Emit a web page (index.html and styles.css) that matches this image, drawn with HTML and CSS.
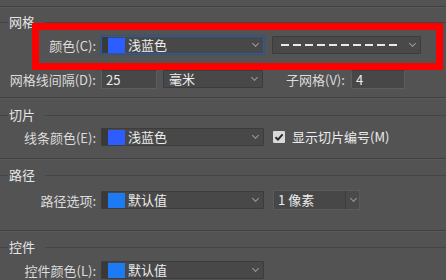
FILE: index.html
```html
<!DOCTYPE html>
<html lang="zh">
<head>
<meta charset="utf-8">
<link rel="stylesheet" href="styles.css">
</head>
<body>
<div class="panel">
  <section class="group g1">
    <div class="legend"><span class="lead"></span><span class="title">网格</span><span class="rule"></span></div>
    <div class="row r1">
      <label class="lbl">颜色(C):</label>
      <div class="combo focus w163"><span class="sw-pad"></span><span class="swatch lightblue"></span><span class="ctext">浅蓝色</span><span class="chev"></span></div>
      <div class="combo dashcombo"><span class="dashes"></span><span class="chev"></span></div>
    </div>
    <div class="row r2">
      <label class="lbl">网格线间隔(D):</label>
      <div class="input w55">25</div>
      <div class="combo w100"><span class="ctext pl">毫米</span><span class="chev"></span></div>
      <label class="lbl2">子网格(V):</label>
      <div class="input w54">4</div>
    </div>
    <div class="highlight"></div>
  </section>
  <section class="group g2">
    <div class="legend"><span class="lead"></span><span class="title">切片</span><span class="rule"></span></div>
    <div class="row">
      <label class="lbl">线条颜色(E):</label>
      <div class="combo w163"><span class="sw-pad"></span><span class="swatch lightblue"></span><span class="ctext">浅蓝色</span><span class="chev"></span></div>
      <div class="check"><span class="box"><svg width="12" height="12" viewBox="0 0 12 12"><path d="M2.5 6.2 L5 8.6 L9.6 3.4" fill="none" stroke="#2a2a2a" stroke-width="2"/></svg></span><span class="ctext">显示切片编号(M)</span></div>
    </div>
  </section>
  <section class="group g3">
    <div class="legend"><span class="lead"></span><span class="title">路径</span><span class="rule"></span></div>
    <div class="row">
      <label class="lbl">路径选项:</label>
      <div class="combo w163"><span class="sw-pad"></span><span class="swatch defblue"></span><span class="ctext">默认值</span><span class="chev"></span></div>
      <div class="editcombo"><span class="etext">1 像素</span><span class="ebtn"><span class="chev"></span></span></div>
    </div>
  </section>
  <section class="group g4">
    <div class="legend"><span class="lead"></span><span class="title">控件</span><span class="rule"></span></div>
    <div class="row">
      <label class="lbl">控件颜色(L):</label>
      <div class="combo w163"><span class="sw-pad"></span><span class="swatch defblue"></span><span class="ctext">默认值</span><span class="chev"></span></div>
    </div>
  </section>
</div>
</body>
</html>
```

FILE: styles.css
```css
* { box-sizing: border-box; }
html, body { margin: 0; padding: 0; }
body {
  width: 446px;
  height: 280px;
  overflow: hidden;
  background: #535353;
  color: #e2e2e2;
  font-family: "Noto Sans CJK SC", "Noto Sans", sans-serif;
  font-size: 13px;
}
.panel { padding-top: 6px; }
.group {
  position: relative;
  border-top: 1px solid #404040;
  box-shadow: inset 0 1px 0 #5a5a5a;
}
.g1 { padding-top: 7px; height: 91px; }
.g2 { padding-top: 9px; height: 61px; }
.g3 { padding-top: 8px; height: 72px; }
.g4 { padding-top: 8px; }

.legend {
  display: flex;
  align-items: center;
  height: 16px;
  line-height: 16px;
}
.legend .lead { width: 8px; height: 1px; background: #444; }
.legend .title { padding: 0 10px 0 1px; color: #e6e6e6; }
.legend .rule { flex: 1; height: 1px; background: #444; }

.row {
  display: flex;
  align-items: center;
  height: 20px;
}
.g1 .r1 { margin-top: 5px; }
.g1 .r2 { margin-top: 14px; }
.g2 .row { margin-top: 4px; }
.g3 .row { margin-top: 7px; }
.g4 .row { margin-top: 5px; }

.lbl {
  width: 97px;
  text-align: right;
  padding-right: 1px;
  margin-right: 4px;
  color: #dcdcdc;
  white-space: nowrap;
}
.lbl2 {
  margin-left: 23px;
  margin-right: 6px;
  color: #dcdcdc;
  white-space: nowrap;
}

.combo {
  position: relative;
  display: flex;
  align-items: center;
  height: 18px;
  background: #484848;
  border: 1px solid #3c3c3c;
  border-radius: 1px;
}
.combo.focus { border-color: #2f5a97; box-shadow: 0 0 0 1px #35527a; }
.w163 { width: 163px; }
.w100 { width: 100px; margin-left: 6px; }
.sw-pad { width: 6px; height: 16px; background: #393939; }
.swatch { width: 17px; height: 15px; margin-left: 0; }
.lightblue { background: #2d5cff; }
.defblue { background: #1c7bf2; }
.ctext { margin-left: 3px; color: #ececec; line-height: 16px; white-space: nowrap; }
.ctext.pl { margin-left: 5px; }
.chev {
  position: absolute;
  right: 5px;
  top: 4px;
  width: 5px;
  height: 5px;
  border-right: 1.5px solid #9a9a9a;
  border-bottom: 1.5px solid #9a9a9a;
  transform: rotate(45deg);
}
.dashcombo { width: 149px; margin-left: 8px; background: #494949; }
.dashes {
  margin-left: 8px;
  width: 116px;
  height: 2px;
  background: repeating-linear-gradient(90deg, #e8e8e8 0 8px, transparent 8px 12px);
}

.input {
  height: 19px;
  background: #474747;
  border: 1px solid #5e5e5e;
  border-top-color: #3e3e3e;
  padding-left: 4px;
  line-height: 17px;
  color: #ececec;
}
.w55 { width: 56px; }
.w54 { width: 54px; }

.check { display: flex; align-items: center; margin-left: 9px; }
.check .box {
  width: 12px; height: 12px;
  background: #d9d9d9;
  border-radius: 1px;
  display: flex;
}
.check .ctext { margin-left: 7px; }

.editcombo {
  display: flex;
  margin-left: 9px;
  width: 87px;
  height: 20px;
  border: 1px solid #5a5a5a;
  background: #474747;
}
.etext { flex: 1; padding-left: 4px; line-height: 18px; color: #ececec; white-space: nowrap; }
.ebtn {
  position: relative;
  width: 14px;
  border-left: 1px solid #3c3c3c;
  background: #4a4a4a;
}
.ebtn .chev { right: 3px; top: 5px; }

.highlight {
  position: absolute;
  left: 32px;
  top: 16px;
  width: 411px;
  height: 47px;
  border: 7px solid #ff0000;
  pointer-events: none;
}
```
